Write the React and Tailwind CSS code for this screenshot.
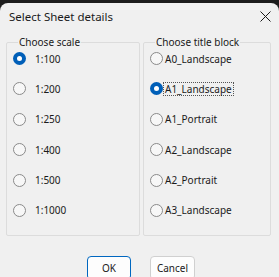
import React from "react";

const font = { fontFamily: '"Noto Sans", "Open Sans", sans-serif' };

function Radio({ checked }) {
  return checked ? (
    <span className="relative flex h-[13px] w-[13px] shrink-0 items-center justify-center rounded-full bg-[#005fb8]">
      <span className="h-[5px] w-[5px] rounded-full bg-white" />
    </span>
  ) : (
    <span className="h-[13px] w-[13px] shrink-0 rounded-full border border-[#8a8a8a] bg-[#f7f7f7]" />
  );
}

export default function App() {
  const scales = ["1:100", "1:200", "1:250", "1:400", "1:500", "1:1000"];
  const blocks = ["A0_Landscape", "A1_Landscape", "A1_Portrait", "A2_Landscape", "A2_Portrait", "A3_Landscape"];
  return (
    <div className="h-[277px] w-[279px] overflow-hidden bg-[#1c1c1c]" style={font}>
      <div className="mt-[3px] flex h-[274px] flex-col rounded-t-[8px] bg-[#f0f0f0]">
        <div className="flex h-[27px] shrink-0 items-center justify-between pl-[9px] pr-[7px]">
          <span className="text-[11.5px] leading-none text-[#1a1a1a]">Select Sheet details</span>
          <svg width="11" height="11" viewBox="0 0 11 11" className="mr-[1px]">
            <path d="M0.5 0.5 L10.5 10.5 M10.5 0.5 L0.5 10.5" stroke="#1a1a1a" strokeWidth="1" />
          </svg>
        </div>
        <div className="mt-[4px] flex shrink-0 gap-[3px] pl-[6px]">
          <fieldset className="h-[202px] w-[134px] rounded-[2px] border border-[#dcdcdc] pl-[6px]">
            <legend className="ml-[5px] px-[1px] text-[10px] leading-[16px] text-[#1a1a1a]">Choose scale</legend>
            <div className="flex flex-col gap-[17.4px] pt-[2px]">
              {scales.map((s, i) => (
                <div key={s} className="flex h-[13px] items-center gap-[9px]">
                  <Radio checked={i === 0} />
                  <span className="text-[10px] leading-none text-[#1a1a1a]">{s}</span>
                </div>
              ))}
            </div>
          </fieldset>
          <fieldset className="h-[202px] w-[128px] rounded-[2px] border border-[#dcdcdc] pl-[6px]">
            <legend className="ml-[5px] px-[1px] text-[10px] leading-[16px] text-[#1a1a1a]">Choose title block</legend>
            <div className="flex flex-col gap-[17.4px] pt-[2px]">
              {blocks.map((s, i) => (
                <div key={s} className="flex h-[13px] items-center gap-[0px]">
                  <Radio checked={i === 1} />
                  <span
                    className={
                      "px-[1px] py-[1px] text-[10px] leading-[10px] text-[#1a1a1a] " +
                      (i === 1 ? "border border-dotted border-[#555]" : "border border-transparent")
                    }
                  >
                    {s}
                  </span>
                </div>
              ))}
            </div>
          </fieldset>
        </div>
        <div className="mt-[20px] flex shrink-0 gap-[19px] pl-[87px]">
          <button className="h-[24px] w-[44px] rounded-[4px] border border-[#0067c0] bg-[#fdfdfd] text-[10px] text-[#1a1a1a]">
            OK
          </button>
          <button className="h-[24px] w-[45px] rounded-[4px] border border-[#d0d0d0] bg-[#fdfdfd] text-[10px] text-[#1a1a1a]">
            Cancel
          </button>
        </div>
      </div>
    </div>
  );
}
